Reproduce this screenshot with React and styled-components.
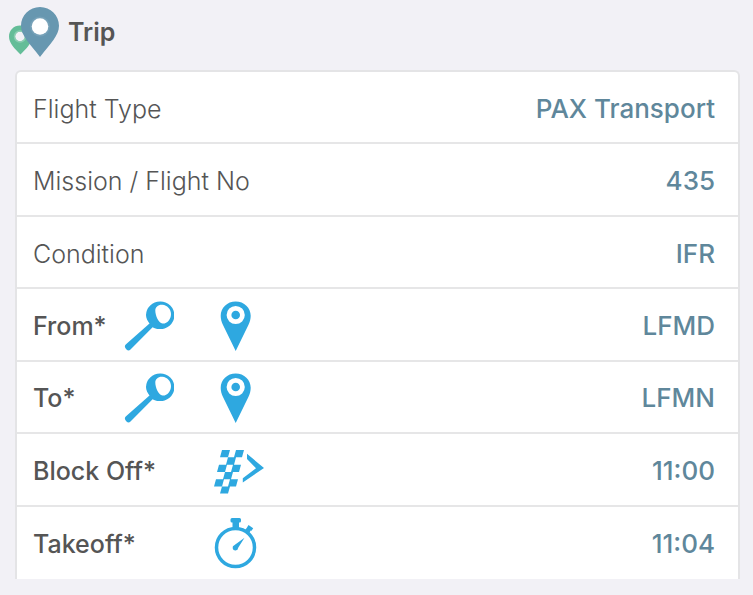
import styled, { createGlobalStyle } from "styled-components";

const trip = [
  { label: "Flight Type", value: "PAX Transport" },
  { label: "Mission / Flight No", value: "435" },
  { label: "Condition", value: "IFR" },
  { label: "From*", value: "LFMD", required: true, search: true, action: "locate" },
  { label: "To*", value: "LFMN", required: true, search: true, action: "locate" },
  { label: "Block Off*", value: "11:00", required: true, action: "block" },
  { label: "Takeoff*", value: "11:04", required: true, action: "timer" },
];

const actions = {
  locate: { title: "Use current location", Icon: PinIcon },
  block: { title: "Set block off time", Icon: FlagIcon },
  timer: { title: "Set takeoff time", Icon: StopwatchIcon },
};

export default function App() {
  return (
    <>
      <GlobalStyle />
      <Page>
        <Header>
          <TripLogo />
          <Title>Trip</Title>
        </Header>
        <Card>
          {trip.map((field) => (
            <TripRow key={field.label} {...field} />
          ))}
        </Card>
      </Page>
    </>
  );
}

function TripRow({ label, value, required, search, action }) {
  const { title, Icon } = actions[action] || {};
  return (
    <Row>
      <Label $required={required} $wide={!search}>
        {label}
      </Label>
      {search && (
        <IconButton type="button" aria-label={"Search " + label}>
          <SearchIcon />
        </IconButton>
      )}
      {Icon && (
        <IconButton type="button" aria-label={title}>
          <Icon />
        </IconButton>
      )}
      <Value>{value}</Value>
    </Row>
  );
}

function TripLogo() {
  return (
    <svg width="50" height="50" viewBox="0 0 50 50" aria-hidden="true">
      <path
        fill="#64bd98"
        fillRule="evenodd"
        d="M11 18.500C4.800 18.500 0 23.300 0 29.500C0 36 5.500 41.500 11.500 47.500C17.500 41.500 23 36 23 29.500C23 23.300 17.500 18.500 11 18.500ZM11 24.500A5 5 0 1 1 11 34.500A5 5 0 1 1 11 24.500Z"
      />
      <circle cx="11" cy="29.500" r="5.500" fill="none" stroke="#8bcdb2" strokeWidth="1.500" />
      <path
        fill="#6797b0"
        d="M31 0C20.500 0 12 8.300 12 18.700C12 29 21 36.500 31 50C41 36.500 50 29 50 18.700C50 8.300 41.500 0 31 0Z"
      />
      <circle cx="31" cy="19.500" r="10" fill="#76a1b8" />
      <circle cx="31" cy="19.500" r="8.300" fill="#ffffff" />
    </svg>
  );
}

function SearchIcon() {
  return (
    <svg width="50" height="50" viewBox="0 0 50 50" fill="#2ea8e0" aria-hidden="true">
      <path
        fillRule="evenodd"
        d="M36 0.500A13.800 13.800 0 1 1 35 28C32.500 28 30.500 27.300 28.600 26.200L6.500 48.500Q4.500 50.300 2.500 48.500L1.500 47.200Q0 45.200 2 43.300L25.500 22.400C23.500 20 22 17 22 14A14 13.800 0 0 1 36 0.500ZM38.500 3.800C34.500 3.300 31.300 6 31.300 9.500C31.300 14.500 34.500 22 38.500 22.600C43 23 47 18.500 47 13C47 8 43 4.400 38.500 3.800Z"
      />
    </svg>
  );
}

function PinIcon() {
  return (
    <svg width="50" height="50" viewBox="0 0 50 50" fill="#2ea8e0" aria-hidden="true">
      <path
        fillRule="evenodd"
        d="M24.700 0.500C16.200 0.500 9.700 6.800 9.700 14.800C9.700 18 10.500 21 12 24L24.700 50L37.400 24C38.900 21 39.700 18 39.700 14.800C39.700 6.800 33.200 0.500 24.700 0.500ZM24.700 4.900A9.100 9.100 0 1 1 24.700 23.100A9.100 9.100 0 1 1 24.700 4.900Z"
      />
      <circle cx="24.700" cy="14" r="4.300" />
    </svg>
  );
}

function FlagIcon() {
  return (
    <svg width="54" height="50" viewBox="0 0 54 50" fill="#2ea8e0" aria-hidden="true">
      <path d="M11 4h8l-2 7.300h-8zM25 4h8l-2 7.300h-8zM17 11.300h8l-2 7.400h-8zM8 18.700h8l-2 7.300h-8zM22 18.700h8l-2 7.300h-8zM14 26h8l-2 7.300h-8zM5 33.300h8l-2 7.300h-8zM19 33.300h8l-2 7.300h-8zM11 40.600h8l-2 7h-8z" />
      <path d="M36 7.800L53 22L31.800 36.500V32.300L45 22.300L36 13Z" />
    </svg>
  );
}

function StopwatchIcon() {
  return (
    <svg width="50" height="52" viewBox="0 -2 50 52" fill="#2ea8e0" aria-hidden="true">
      <circle cx="24.500" cy="27.500" r="19" fill="none" stroke="#2ea8e0" strokeWidth="3.500" />
      <path d="M21 -2h7.500q1.500 0 1.500 1.500v1.500q0 1.500-1.500 1.500h-.5v6h-6.500v-6h-.5q-1.500 0-1.500-1.500v-1.500q0-1.500 1.500-1.500z" />
      <path d="M37.500 5L42.200 8.200L40.500 10.800L39.700 10.400L38.200 13L34 10L35.700 8Z" />
      <path d="M33.500 17.700L27.200 27.800A2.800 2.800 0 1 1 23.600 25Z" />
    </svg>
  );
}

const GlobalStyle = createGlobalStyle`
  * {
    box-sizing: border-box;
  }
  body {
    margin: 0;
    background: #f2f1f6;
    font-family: Inter, "Liberation Sans", sans-serif;
    font-size: 25px;
    line-height: 32px;
    color: #555555;
  }
`;

const Page = styled.main`
  min-height: 100vh;
  display: flex;
  flex-direction: column;
  padding: 7px 13px 16px 15px;
`;

const Header = styled.header`
  display: flex;
  gap: 9px;
  height: 63px;
  margin-left: -6px;
`;

const Title = styled.h1`
  margin: 0;
  font-size: 25px;
  font-weight: 600;
  line-height: 50px;
`;

const Card = styled.dl`
  flex: 1;
  display: grid;
  grid-auto-rows: 1fr;
  margin: 0;
  background: #ffffff;
  border: 2px solid #e4e4e6;
  border-bottom: none;
  border-radius: 6px 6px 0 0;
`;

const Row = styled.div`
  display: grid;
  grid-template-columns: 91px 87px 54px 1fr;
  align-items: center;
  padding: 3px 23px 0 16px;

  &:not(:last-child) {
    border-bottom: 2px solid #e6e6e7;
  }
`;

const Label = styled.dt`
  grid-column: span ${({ $wide }) => ($wide ? 2 : 1)};
  font-weight: ${({ $required }) => ($required ? 500 : 300)};
  white-space: nowrap;
`;

const Value = styled.dd`
  grid-column: 4;
  margin: 0;
  font-size: 26px;
  font-weight: 500;
  text-align: right;
  color: #5f879b;
`;

const IconButton = styled.button`
  display: flex;
  padding: 0;
  border: none;
  background: none;
  cursor: pointer;
`;
